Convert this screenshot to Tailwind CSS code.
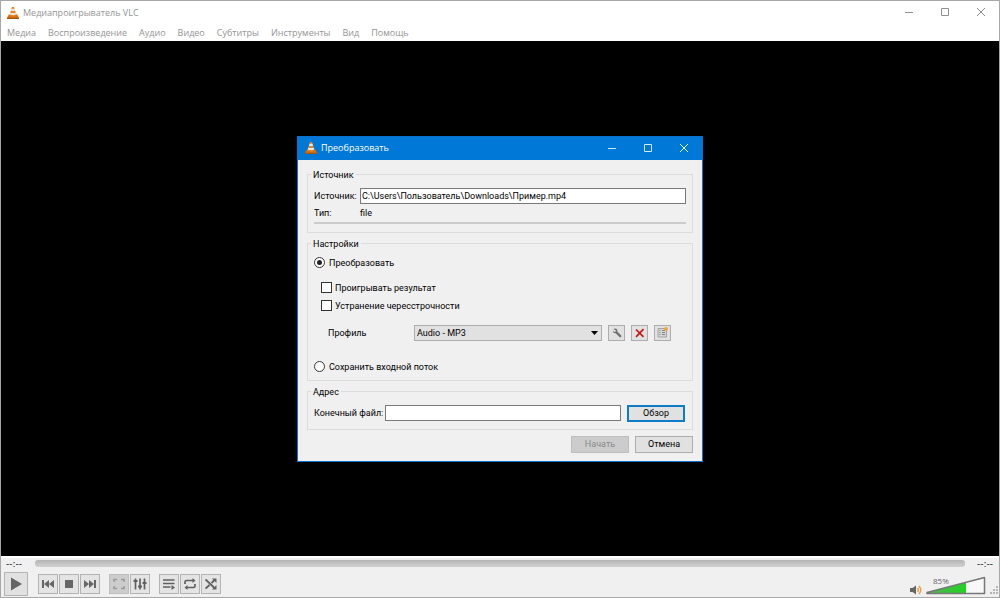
<!DOCTYPE html>
<html lang="ru">
<head>
<meta charset="utf-8">
<title>Медиапроигрыватель VLC</title>
<script src="https://cdn.jsdelivr.net/npm/@tailwindcss/browser@4"></script>
</head>
<body class="flex h-screen flex-col border border-[#a8a8a8] bg-white font-['Open_Sans','Noto_Sans',sans-serif] text-[9px] leading-[14px] text-[#949494]">
<svg class="hidden">
  <defs>
    <symbol id="cone" viewBox="0 0 24 24">
      <path d="M3.500 15h17L24 22H0z" fill="#d9700f"/>
      <path d="M10 0h4l5.500 17.500q-7.500 3.500-15 0z" fill="#e87d16"/>
      <path d="M9 3.500h6l1.200 4q-4.200 1.500-8.400 0zM6.700 11q5.300 2 10.600 0l1.300 4.200q-6.600 2.200-13.200 0z" fill="#efe6da"/>
      <path d="M0 21.500h24V24H0z" fill="#a5540c"/>
    </symbol>
  </defs>
</svg>

<header class="flex h-6 items-center pl-[6px]">
  <svg class="size-3"><use href="#cone"/></svg>
  <h1 class="ml-1 flex-1">Медиапроигрыватель VLC</h1>
  <div class="flex">
    <button aria-label="Свернуть" class="grid h-[22px] w-9 place-items-center"><svg class="size-[10px]" viewBox="0 0 10 10" fill="none" stroke="#8f8f8f"><path d="M1 4.500h8"/></svg></button>
    <button aria-label="Развернуть" class="grid h-[22px] w-9 place-items-center"><svg class="size-[10px]" viewBox="0 0 10 10" fill="none" stroke="#8f8f8f"><path d="M1.500 .5h7v7h-7z"/></svg></button>
    <button aria-label="Закрыть" class="grid h-[22px] w-9 place-items-center"><svg class="size-[10px]" viewBox="0 0 10 10" fill="none" stroke="#8f8f8f"><path d="M1 0l8 8M9 0l-8 8"/></svg></button>
  </div>
</header>

<nav class="flex h-4 items-center gap-3 pl-[6px]">
  <button>Медиа</button>
  <button>Воспроизведение</button>
  <button>Аудио</button>
  <button>Видео</button>
  <button>Субтитры</button>
  <button>Инструменты</button>
  <button>Вид</button>
  <button>Помощь</button>
</nav>

<main class="grid flex-1 place-items-center bg-black">
  <section role="dialog" aria-labelledby="dlg" class="w-[406px] border border-[#0a72cc] bg-[#f0f0f0] font-[Roboto,'Noto_Sans',sans-serif] text-black">
    <header class="flex h-[23px] items-center bg-[#0078d7] pl-[7px] text-white">
      <svg class="size-3"><use href="#cone"/></svg>
      <h2 id="dlg" class="ml-1 flex-1 font-['Open_Sans',sans-serif]">Преобразовать</h2>
      <button aria-label="Свернуть" class="grid h-[22px] w-9 place-items-center"><svg class="size-[10px]" viewBox="0 0 10 10" fill="none" stroke="#d4ebff"><path d="M1 5.500h8"/></svg></button>
      <button aria-label="Развернуть" class="grid h-[22px] w-9 place-items-center"><svg class="size-[10px]" viewBox="0 0 10 10" fill="none" stroke="#d4ebff"><path d="M1.500 1.500h7v7h-7z"/></svg></button>
      <button aria-label="Закрыть" class="grid h-[22px] w-9 place-items-center"><svg class="size-[10px]" viewBox="0 0 10 10" fill="none" stroke="#e8f5ff"><path d="M1 1l8 8M9 1l-8 8"/></svg></button>
    </header>

    <form class="px-[9px] pt-2 pb-2">
      <fieldset class="border border-[#dcdcdc] px-[6px] pb-2">
        <legend class="-ml-[3px] px-[2px]">Источник</legend>
        <div class="flex items-center pt-[6px]">
          <label for="src" class="w-[46px] whitespace-nowrap">Источник:</label>
          <input id="src" type="text" value="C:\Users\Пользователь\Downloads\Пример.mp4" class="h-4 min-w-0 flex-1 border border-[#7a7a7a] bg-white px-px">
        </div>
        <div class="flex pt-[2px]">
          <span class="w-[46px]">Тип:</span>
          <span>file</span>
        </div>
        <hr class="mt-[2px] border-t-2 border-[#cbcbcb]">
      </fieldset>

      <fieldset class="mt-1 border border-[#dcdcdc] px-[6px] pb-[6px]">
        <legend class="-ml-[3px] px-[2px]">Настройки</legend>
        <label class="flex items-center gap-1 pt-[5px]">
          <input type="radio" name="mode" checked class="grid size-[11px] appearance-none place-items-center rounded-full border border-[#333] bg-white before:size-[5px] before:rounded-full checked:before:bg-[#222]">
          Преобразовать
        </label>
        <label class="mt-[11px] flex items-center gap-[3px] pl-[7px]">
          <input type="checkbox" class="size-[11px] appearance-none border border-[#333] bg-white">
          Проигрывать результат
        </label>
        <label class="mt-1 flex items-center gap-[3px] pl-[7px]">
          <input type="checkbox" class="size-[11px] appearance-none border border-[#333] bg-white">
          Устранение чересстрочности
        </label>
        <div class="mt-3 flex items-center pr-[15px] pl-[14px]">
          <label for="profile" class="w-[86px]">Профиль</label>
          <div class="relative flex-1">
            <select id="profile" class="block h-4 w-full appearance-none border border-[#adadad] bg-[#e1e1e1] pl-[2px] leading-[14px]">
              <option>Audio - MP3</option>
            </select>
            <svg class="pointer-events-none absolute top-[6px] right-1 h-1 w-[7px]" viewBox="0 0 7 4"><path d="M0 0h7L3.500 4z"/></svg>
          </div>
          <div class="ml-[6px] flex gap-[6px]">
            <button type="button" aria-label="Изменить профиль" class="grid h-4 w-[17px] place-items-center border border-[#adadad] bg-[#e1e1e1]">
              <svg class="size-[10px]" viewBox="0 0 10 10"><path d="M1.200 1.200 3 .6C4.700.5 5.600 1.800 5.300 3.500l4 4q.5.900-.2 1.500t-1.400.2l-4-4C2 5.500.8 4.500.8 2.800L2.300 4l1.300-.4.300-1.300z" fill="#717171"/></svg>
            </button>
            <button type="button" aria-label="Удалить профиль" class="grid h-4 w-[17px] place-items-center border border-[#adadad] bg-[#e1e1e1]">
              <svg class="size-[10px]" viewBox="0 0 10 10"><path d="M1 1.500 8.500 8.800M8.500 1.200 1 8.800" stroke="#c81414" stroke-width="1.700"/></svg>
            </button>
            <button type="button" aria-label="Создать профиль" class="grid h-4 w-[17px] place-items-center border border-[#adadad] bg-[#e1e1e1]">
              <svg class="size-[11px]" viewBox="0 0 11 11"><path d="M1 1.500h8.500v8.500H1z" fill="#d5d5d5" stroke="#a3a3a3"/><path d="M2.500 3.500h1M2.500 5.500h1M2.500 7.500h1M5 3.500h3M5 5.500h3M5 7.500h3" stroke="#858585"/><circle cx="9" cy="2" r="2" fill="#f2a33a"/></svg>
            </button>
          </div>
        </div>
        <label class="mt-[19px] flex items-center gap-1">
          <input type="radio" name="mode" class="size-[11px] appearance-none rounded-full border border-[#333] bg-white">
          Сохранить входной поток
        </label>
      </fieldset>

      <fieldset class="mt-1 border border-[#dcdcdc] px-[6px] pb-[7px]">
        <legend class="-ml-[3px] px-[2px]">Адрес</legend>
        <div class="flex items-center pt-[6px] pr-px">
          <label for="dest" class="w-[71px] whitespace-nowrap">Конечный файл:</label>
          <input id="dest" type="text" class="h-4 min-w-0 flex-1 border border-[#7a7a7a] bg-white px-px">
          <button type="button" class="ml-[6px] h-[17px] w-[58px] border-2 border-[#0f7cc8] bg-[#e1e1e1] leading-[13px]">Обзор</button>
        </div>
      </fieldset>

      <div class="mt-[6px] flex justify-end gap-[6px]">
        <button type="button" disabled class="h-[17px] w-[58px] border border-[#bfbfbf] bg-[#cccccc] text-[#8a8a8a]">Начать</button>
        <button type="button" class="h-[17px] w-[58px] border border-[#adadad] bg-[#e1e1e1]">Отмена</button>
      </div>
    </form>
  </section>
</main>

<footer class="bg-[#f0f0f0] text-[#111]">
  <div class="flex h-[14px] items-center gap-3 border-t-2 border-white px-[5px] font-['DejaVu_Sans',sans-serif]">
    <span class="w-[17px] whitespace-nowrap">--:--</span>
    <input type="range" aria-label="Позиция" value="0" class="mb-[2px] h-[7px] min-w-0 flex-1 appearance-none rounded-[3px] bg-linear-to-b from-[#b4b4b4] to-[#d2d2d2] [&::-webkit-slider-thumb]:size-0 [&::-webkit-slider-thumb]:appearance-none">
    <span class="w-[17px] whitespace-nowrap">--:--</span>
  </div>
  <div class="flex h-[27px] items-center pl-[3px]">
    <button aria-label="Воспроизвести" class="grid size-6 place-items-center border border-[#b4b4b4] bg-[#e1e1e1]"><svg class="size-[14px]" viewBox="0 0 14 14"><path d="M2 0.500 13 7 2 13.500z" fill="#666"/></svg></button>
    <div class="ml-[10px] flex gap-px">
      <button aria-label="Назад" class="grid size-5 place-items-center border border-[#b4b4b4] bg-[#e4e4e4]"><svg class="h-2 w-3" viewBox="0 0 12 8" fill="#666"><path d="M0 0h2v8H0zM7 0v8L2 4zM12 0v8L7 4z"/></svg></button>
      <button aria-label="Стоп" class="grid size-5 place-items-center border border-[#b4b4b4] bg-[#e4e4e4]"><svg class="size-2" viewBox="0 0 8 8" fill="#666"><path d="M0 0h8v8H0z"/></svg></button>
      <button aria-label="Вперёд" class="grid size-5 place-items-center border border-[#b4b4b4] bg-[#e4e4e4]"><svg class="h-2 w-3" viewBox="0 0 12 8" fill="#666"><path d="M10 0h2v8h-2zM0 0v8l5-4zM5 0v8l5-4z"/></svg></button>
    </div>
    <div class="ml-[9px] flex gap-px">
      <button disabled aria-label="Полный экран" class="grid size-5 place-items-center border border-[#bdbdbd] bg-[#cccccc]"><svg class="size-3" viewBox="0 0 12 12" fill="none" stroke="#999" stroke-width="1.500"><path d="M1 4V1.500h3M8 1.500h3V4M11 8v2.500H8M4 10.500H1V8"/></svg></button>
      <button aria-label="Эквалайзер" class="grid size-5 place-items-center border border-[#b4b4b4] bg-[#e4e4e4]"><svg class="size-[14px]" viewBox="0 0 14 14" stroke="#606060" stroke-width="1.700"><path d="M2.500 1.500v11M7 1.500v11M11.500 1.500v11"/><path d="M.5 4h4M5 9.500h4M9.500 6h4" stroke-width="2.200"/></svg></button>
    </div>
    <div class="ml-[9px] flex gap-px">
      <button aria-label="Плейлист" class="grid size-5 place-items-center border border-[#b4b4b4] bg-[#e4e4e4]"><svg class="size-3" viewBox="0 0 12 12"><path d="M0 2h11.500M0 5.500h11.500M0 9h7.500" stroke="#606060" stroke-width="1.700"/><path d="M8.500 7v5L12 9.500z" fill="#606060"/></svg></button>
      <button aria-label="Повтор" class="grid size-5 place-items-center border border-[#b4b4b4] bg-[#e4e4e4]"><svg class="size-3" viewBox="0 0 12 12"><path d="M1 6V4q0-1.500 1.500-1.500H9M11 6v2q0 1.500-1.500 1.500H3" fill="none" stroke="#606060" stroke-width="1.700"/><path d="M8.500 0v5L11.500 2.500zM3.500 7v5L.5 9.500z" fill="#606060"/></svg></button>
      <button aria-label="Случайно" class="grid size-5 place-items-center border border-[#b4b4b4] bg-[#e4e4e4]"><svg class="size-3" viewBox="0 0 12 12"><path d="M.5 1.500 9.500 10M.5 10.500 4.500 7M6.500 5 9.500 2" stroke="#606060" stroke-width="1.800"/><path d="M7 .5h4.500V5zM7 11.500h4.500V7z" fill="#606060"/></svg></button>
    </div>
    <div class="ml-auto flex items-end pt-1">
      <button aria-label="Звук" class="mr-1"><svg class="h-[10px] w-3" viewBox="0 0 12 10"><path d="M0 3h2.500L6 .5v9L2.500 7H0z" fill="#666"/><path d="M7.500 3q1.500 2 0 4M9 1q3.500 4 0 8" fill="none" stroke="#e9a04a" stroke-width="1.500"/></svg></button>
      <div class="relative h-[19px] w-[60px]">
        <svg class="size-full" viewBox="0 0 60 19"><defs><linearGradient id="level"><stop stop-color="#58b058"/><stop offset="1" stop-color="#1fd51f"/></linearGradient></defs><path d="M1 16.500 40 6.500V17H1z" fill="url(#level)"/><path d="M40 6.500 58.500 1.500V17H40z" fill="#f8f8f8"/><path d="M1 16.500 58.500 1.500V17.500H1z" fill="none" stroke="#777" stroke-width="1.500" stroke-linejoin="round"/></svg>
        <output for="vol" class="absolute top-0 left-[7px] text-[8px] leading-[10px] text-[#666]">85%</output>
        <input id="vol" type="range" aria-label="Громкость" max="125" value="85" class="absolute inset-0 w-full opacity-0">
      </div>
      <svg class="ml-1 size-[9px]" viewBox="0 0 9 9" fill="#b5b5b5"><path d="M6 0h2v2H6zM3 3h2v2H3zM6 3h2v2H6zM0 6h2v2H0zM3 6h2v2H3zM6 6h2v2H6z"/></svg>
    </div>
  </div>
</footer>
</body>
</html>
